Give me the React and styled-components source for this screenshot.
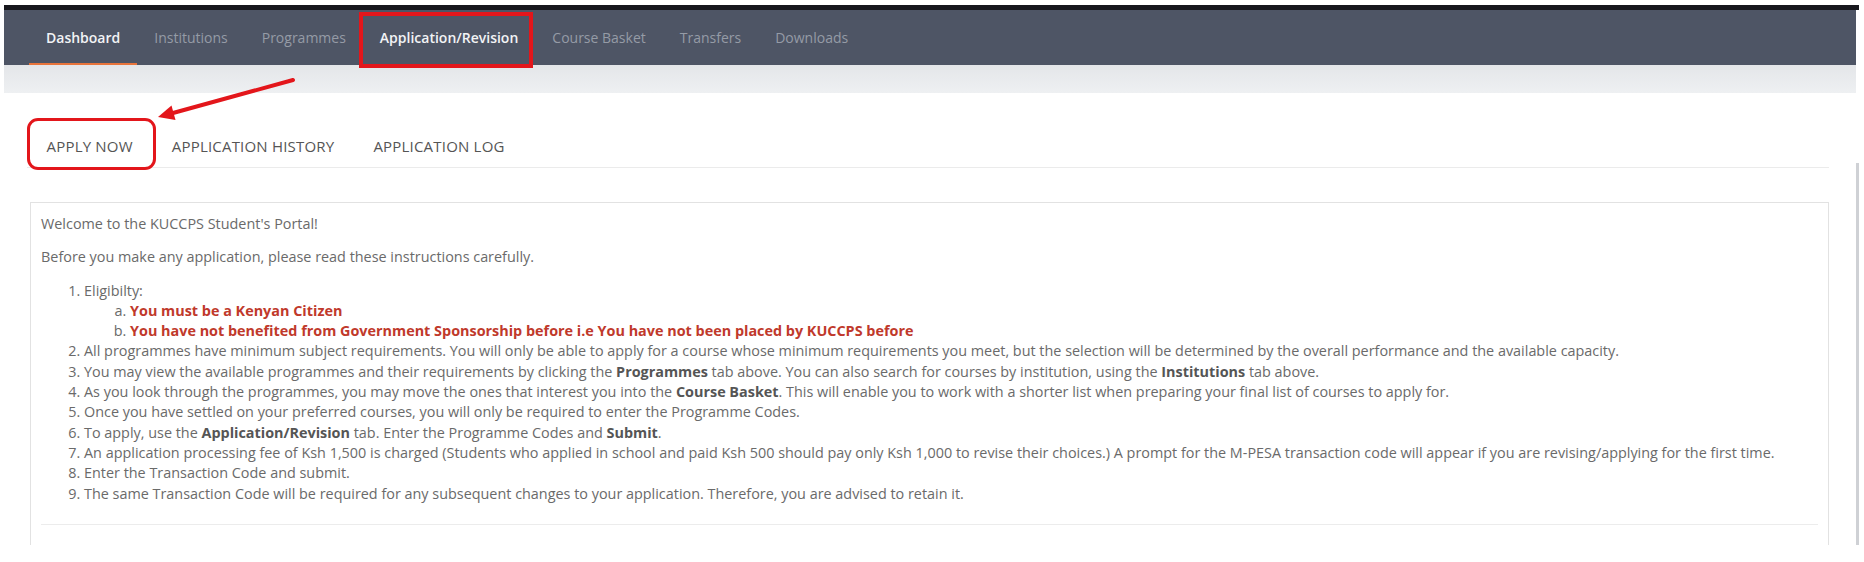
import React from 'react';
import styled, {createGlobalStyle, css} from 'styled-components';

const GlobalStyle = createGlobalStyle`
  html, body {
    margin: 0;
    background: #fff;
  }
  body {
    font-family: "Open Sans", "Liberation Sans", sans-serif;
  }
`;

const RED = '#e3161b';

const Frame = styled.div`
  position: relative;
  display: flex;
  flex-direction: column;
  width: 1855px;
  height: 540px;
  margin: 5px 0 0 4px;
  overflow: hidden;
`;

const TopLine = styled.div`
  height: 5px;
  background: #17171d;
`;

const Row = styled.div`
  display: flex;
  flex: 1;
  min-height: 0;
`;

const Main = styled.div`
  flex: 1;
  display: flex;
  flex-direction: column;
  min-width: 0;
`;

const ScrollEdge = styled.div`
  width: 3px;
  margin-top: 153px;
  background: #cfd1d5;
`;

const NavBar = styled.nav`
  display: flex;
  height: 55px;
  padding-left: 25px;
  background: #4e5565;
`;

const NavItem = styled.a`
  position: relative;
  display: flex;
  align-items: center;
  padding: 0 17px;
  font-size: 14px;
  color: ${p => (p.$bright ? '#f2f3f5' : '#959ba6')};
  font-weight: ${p => (p.$bright ? 600 : 400)};
  box-shadow: ${p => (p.$active ? 'inset 0 -2px 0 #e8743b' : 'none')};
  ${p => p.$marked && css`
    &::after {
      content: '';
      position: absolute;
      top: 2px;
      bottom: -3px;
      left: -4px;
      right: 2px;
      border: 4px solid ${RED};
    }
  `}
`;

const Band = styled.div`
  height: 28px;
  background: linear-gradient(#e4e6e9, #eef0f2);
`;

const TabsRow = styled.div`
  display: flex;
  margin: 34px 27px 0 23px;
  border-bottom: 1px solid #ebebeb;
`;

const Tab = styled.a`
  position: relative;
  height: 40px;
  line-height: 38px;
  padding: 0 19.5px;
  font-size: 15px;
  letter-spacing: 0.2px;
  text-transform: uppercase;
  color: #555;
  ${p => p.$marked && css`
    &::after {
      content: '';
      position: absolute;
      top: -9px;
      bottom: -3px;
      left: 0;
      right: -4px;
      border: 3px solid ${RED};
      border-radius: 11px;
    }
  `}
`;

const Panel = styled.div`
  flex: 1;
  margin: 34px 27px 0 26px;
  padding: 11px 10px 0;
  border: 1px solid #e2e2e2;
  border-bottom: none;
  font-size: 14.4px;
  line-height: 20.3px;
  color: #6a6a6a;
`;

const Para = styled.p`
  margin: 0 0 13px;
`;

const Steps = styled.ol`
  margin: 0;
  padding-left: 43px;
  b {
    color: #555;
    font-weight: 700;
  }
`;

const SubSteps = styled.ol`
  margin: 0;
  padding-left: 46px;
  list-style: lower-alpha;
`;

const Warn = styled.span`
  color: #c0392b;
  font-weight: 700;
`;

const Rule = styled.hr`
  margin: 20px 0 0;
  border: none;
  border-top: 1px solid #ececec;
`;

const Arrow = styled.svg`
  position: absolute;
  left: 140px;
  top: 60px;
`;

const navItems = [
  {label: 'Dashboard', active: true, bright: true},
  {label: 'Institutions'},
  {label: 'Programmes'},
  {label: 'Application/Revision', bright: true, marked: true},
  {label: 'Course Basket'},
  {label: 'Transfers'},
  {label: 'Downloads'},
];

const tabs = [
  {label: 'Apply Now', marked: true},
  {label: 'Application History'},
  {label: 'Application Log'},
];

function App() {
  return (
    <>
      <GlobalStyle/>
      <Frame>
        <TopLine/>
        <Row>
          <Main>
            <NavBar>
              {navItems.map(item => (
                <NavItem
                  key={item.label}
                  $active={item.active}
                  $bright={item.bright}
                  $marked={item.marked}
                >{item.label}</NavItem>
              ))}
            </NavBar>
            <Band/>
            <TabsRow>
              {tabs.map(tab => (
                <Tab key={tab.label} $marked={tab.marked}>{tab.label}</Tab>
              ))}
            </TabsRow>
            <Panel>
              <Para>Welcome to the KUCCPS Student's Portal!</Para>
              <Para>Before you make any application, please read these instructions carefully.</Para>
              <Steps>
                <li>
                  Eligibilty:
                  <SubSteps>
                    <li><Warn>You must be a Kenyan Citizen</Warn></li>
                    <li><Warn>You have not benefited from Government Sponsorship before i.e You have not been placed by KUCCPS before</Warn></li>
                  </SubSteps>
                </li>
                <li>All programmes have minimum subject requirements. You will only be able to apply for a course whose minimum requirements you meet, but the selection will be determined by the overall performance and the available capacity.</li>
                <li>You may view the available programmes and their requirements by clicking the <b>Programmes</b> tab above. You can also search for courses by institution, using the <b>Institutions</b> tab above.</li>
                <li>As you look through the programmes, you may move the ones that interest you into the <b>Course Basket</b>. This will enable you to work with a shorter list when preparing your final list of courses to apply for.</li>
                <li>Once you have settled on your preferred courses, you will only be required to enter the Programme Codes.</li>
                <li>To apply, use the <b>Application/Revision</b> tab. Enter the Programme Codes and <b>Submit</b>.</li>
                <li>An application processing fee of Ksh 1,500 is charged (Students who applied in school and paid Ksh 500 should pay only Ksh 1,000 to revise their choices.) A prompt for the M-PESA transaction code will appear if you are revising/applying for the first time.</li>
                <li>Enter the Transaction Code and submit.</li>
                <li>The same Transaction Code will be required for any subsequent changes to your application. Therefore, you are advised to retain it.</li>
              </Steps>
              <Rule/>
            </Panel>
          </Main>
          <ScrollEdge/>
        </Row>
        <Arrow width="170" height="70" viewBox="0 0 170 70">
          <line x1="149" y1="15" x2="29" y2="48" stroke={RED} strokeWidth="4" strokeLinecap="round"/>
          <polygon points="14,52 31.5,55 27.5,40.5" fill={RED}/>
        </Arrow>
      </Frame>
    </>
  );
}

export default App;
